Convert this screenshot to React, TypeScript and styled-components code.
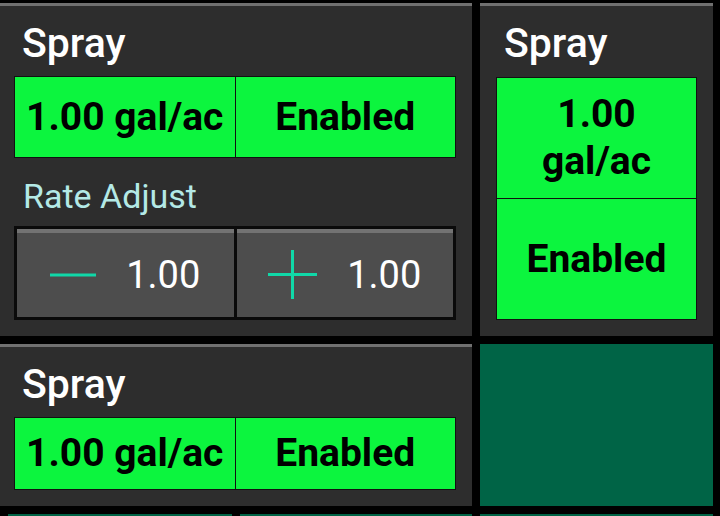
import React from "react";
import styled, { createGlobalStyle } from "styled-components";

const Global = createGlobalStyle`
  html, body { margin: 0; padding: 0; background: #000; }
  body { font-family: Roboto, "Liberation Sans", sans-serif; }
`;

const Page = styled.div`
  width: 720px;
  height: 516px;
  overflow: hidden;
  background: #000;
  padding-top: 3px;
  box-sizing: border-box;
  display: flex;
  flex-direction: column;
  gap: 8px;
`;

const Row = styled.div<{ $indent?: number }>`
  display: flex;
  gap: 8px;
  padding-left: ${(p) => p.$indent ?? 0}px;
  flex-shrink: 0;
`;

const Card = styled.section<{ $w: number; $h: number; $padL?: number }>`
  width: ${(p) => p.$w}px;
  height: ${(p) => p.$h}px;
  box-sizing: border-box;
  background: #2d2d2d;
  border-top: 3px solid #707070;
  padding: 0 16px 16px ${(p) => p.$padL ?? 16}px;
  display: flex;
  flex-direction: column;
`;

const Title = styled.h2`
  margin: 0;
  padding-top: 13px;
  height: 71px;
  box-sizing: border-box;
  font-size: 41px;
  line-height: 48px;
  font-weight: 500;
  color: #fff;
  padding-left: 8px;
`;

const StatusRow = styled.div<{ $h: number }>`
  display: flex;
  height: ${(p) => p.$h}px;
  border: 1px solid #111;
  background: #111;
  gap: 1px;
`;

const StatusStack = styled.div`
  display: flex;
  flex-direction: column;
  flex: 1;
  border: 1px solid #111;
  background: #111;
  gap: 1px;
`;

const Cell = styled.div<{ $wrap?: boolean }>`
  flex: 1;
  min-width: 0;
  background: #0cf53e;
  color: #000;
  font-weight: 700;
  font-size: 39px;
  line-height: 47px;
  display: flex;
  align-items: center;
  justify-content: center;
  text-align: center;
  padding: 0 ${(p) => (p.$wrap ? 12 : 0)}px;
  white-space: ${(p) => (p.$wrap ? "normal" : "nowrap")};
`;

const Label = styled.div`
  margin-top: 19px;
  font-size: 34px;
  line-height: 38px;
  color: #b4e9e6;
  padding-left: 9px;
`;

const Adjust = styled.div`
  margin-top: 11px;
  height: 95px;
  box-sizing: border-box;
  background: #0a0a0a;
  padding: 3px;
  display: flex;
  gap: 3px;
`;

const AdjButton = styled.button`
  flex: 1;
  background: #4d4d4d;
  border: none;
  border-top: 4px solid #737373;
  margin: 0;
  padding: 0;
  display: flex;
  align-items: center;
  justify-content: center;
  gap: 30px;
  color: #fff;
  font-family: Roboto, "Liberation Sans", sans-serif;
  font-size: 38px;
  font-weight: 400;
`;

const Tile = styled.div<{ $w: number; $h: number }>`
  width: ${(p) => p.$w}px;
  height: ${(p) => p.$h}px;
  background: #006446;
`;

const Minus = () => (
  <svg width="46" height="4" viewBox="0 0 46 4">
    <rect x="0" y="0.5" width="46" height="3" fill="#10d8a8" />
  </svg>
);

const Plus = () => (
  <svg width="49" height="49" viewBox="0 0 49 49">
    <rect x="0" y="23" width="49" height="3" fill="#10d8a8" />
    <rect x="23" y="0" width="3" height="49" fill="#10d8a8" />
  </svg>
);

export default function App() {
  return (
    <>
      <Global />
      <Page>
        <Row>
          <Card $w={472} $h={333} $padL={14}>
            <Title>Spray</Title>
            <StatusRow $h={80}>
              <Cell>1.00 gal/ac</Cell>
              <Cell>Enabled</Cell>
            </StatusRow>
            <Label>Rate Adjust</Label>
            <Adjust>
              <AdjButton>
                <Minus />
                <span>1.00</span>
              </AdjButton>
              <AdjButton>
                <Plus />
                <span>1.00</span>
              </AdjButton>
            </Adjust>
          </Card>
          <Card $w={233} $h={333}>
            <Title>Spray</Title>
            <StatusStack>
              <Cell $wrap>1.00 gal/ac</Cell>
              <Cell $wrap>Enabled</Cell>
            </StatusStack>
          </Card>
        </Row>
        <Row>
          <Card $w={472} $h={162} $padL={14}>
            <Title>Spray</Title>
            <StatusRow $h={72}>
              <Cell>1.00 gal/ac</Cell>
              <Cell>Enabled</Cell>
            </StatusRow>
          </Card>
          <Tile $w={233} $h={162} />
        </Row>
        <Row $indent={8}>
          <Tile $w={224} $h={100} />
          <Tile $w={232} $h={100} />
          <Tile $w={233} $h={100} />
        </Row>
      </Page>
    </>
  );
}
